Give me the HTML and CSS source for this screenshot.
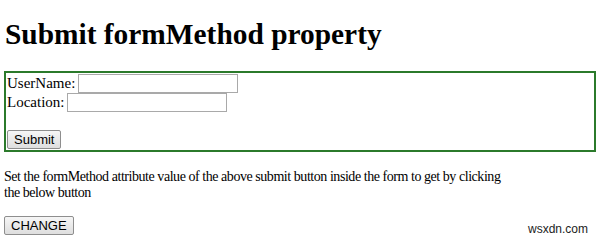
FILE: index.html
```html
<!DOCTYPE html>
<html lang="en">

<head>
    <meta charset="UTF-8">
    <meta name="viewport" content="width=device-width, initial-scale=1.0">
    <title>formMethod</title>
    <link rel="stylesheet" href="styles.css">
</head>

<body>
    <h1>Submit formMethod property</h1>
    <form class="box" id="FORM1" method="post" action="/sample_page.php">
        <div class="row">
            <label>UserName:</label>
            <input type="text" name="usrN">
        </div>
        <div class="row">
            <label>Location:</label>
            <input type="text" name="Loc">
        </div>
        <button class="btn" type="submit" id="SUBMIT1">Submit</button>
    </form>
    <p class="note">Set the formMethod attribute value of the above submit button inside the form to get by clicking<br>the below button</p>
    <button class="btn" type="button">CHANGE</button>
    <span class="mark">wsxdn.com</span>
</body>

</html>
```

FILE: styles.css
```css
* {
    box-sizing: border-box;
}

body {
    margin: 0 4px;
    font-family: "Liberation Serif", "Times New Roman", serif;
    font-size: 15px;
    color: #000;
    background-color: #fff;
}

h1 {
    font-size: 29.4px;
    margin: 16px 0 19px 1px;
    line-height: 36px;
}

.box {
    border: 2px solid #2b7a2b;
    padding: 1px;
}

.row {
    display: flex;
    align-items: center;
    gap: 3px;
    height: 19px;
}

.row input {
    width: 160px;
    height: 19px;
    border: 1px solid #a9a9a9;
    padding: 0;
}

.btn {
    font-family: "Liberation Sans", Arial, sans-serif;
    font-size: 13px;
    color: #000;
    background: linear-gradient(#f6f6f6, #dedede);
    border: 1px solid #8e8e8e;
    border-radius: 2px;
    padding: 0 6px;
    height: 19px;
}

.box .btn {
    margin-top: 18px;
}

.note {
    font-size: 14px;
    letter-spacing: -0.45px;
    margin: 17px 0 15px;
    line-height: 16px;
}

.mark {
    position: absolute;
    right: 12px;
    bottom: 4px;
    font-family: "Liberation Sans", Arial, sans-serif;
    font-size: 12px;
    color: #222;
}
```
